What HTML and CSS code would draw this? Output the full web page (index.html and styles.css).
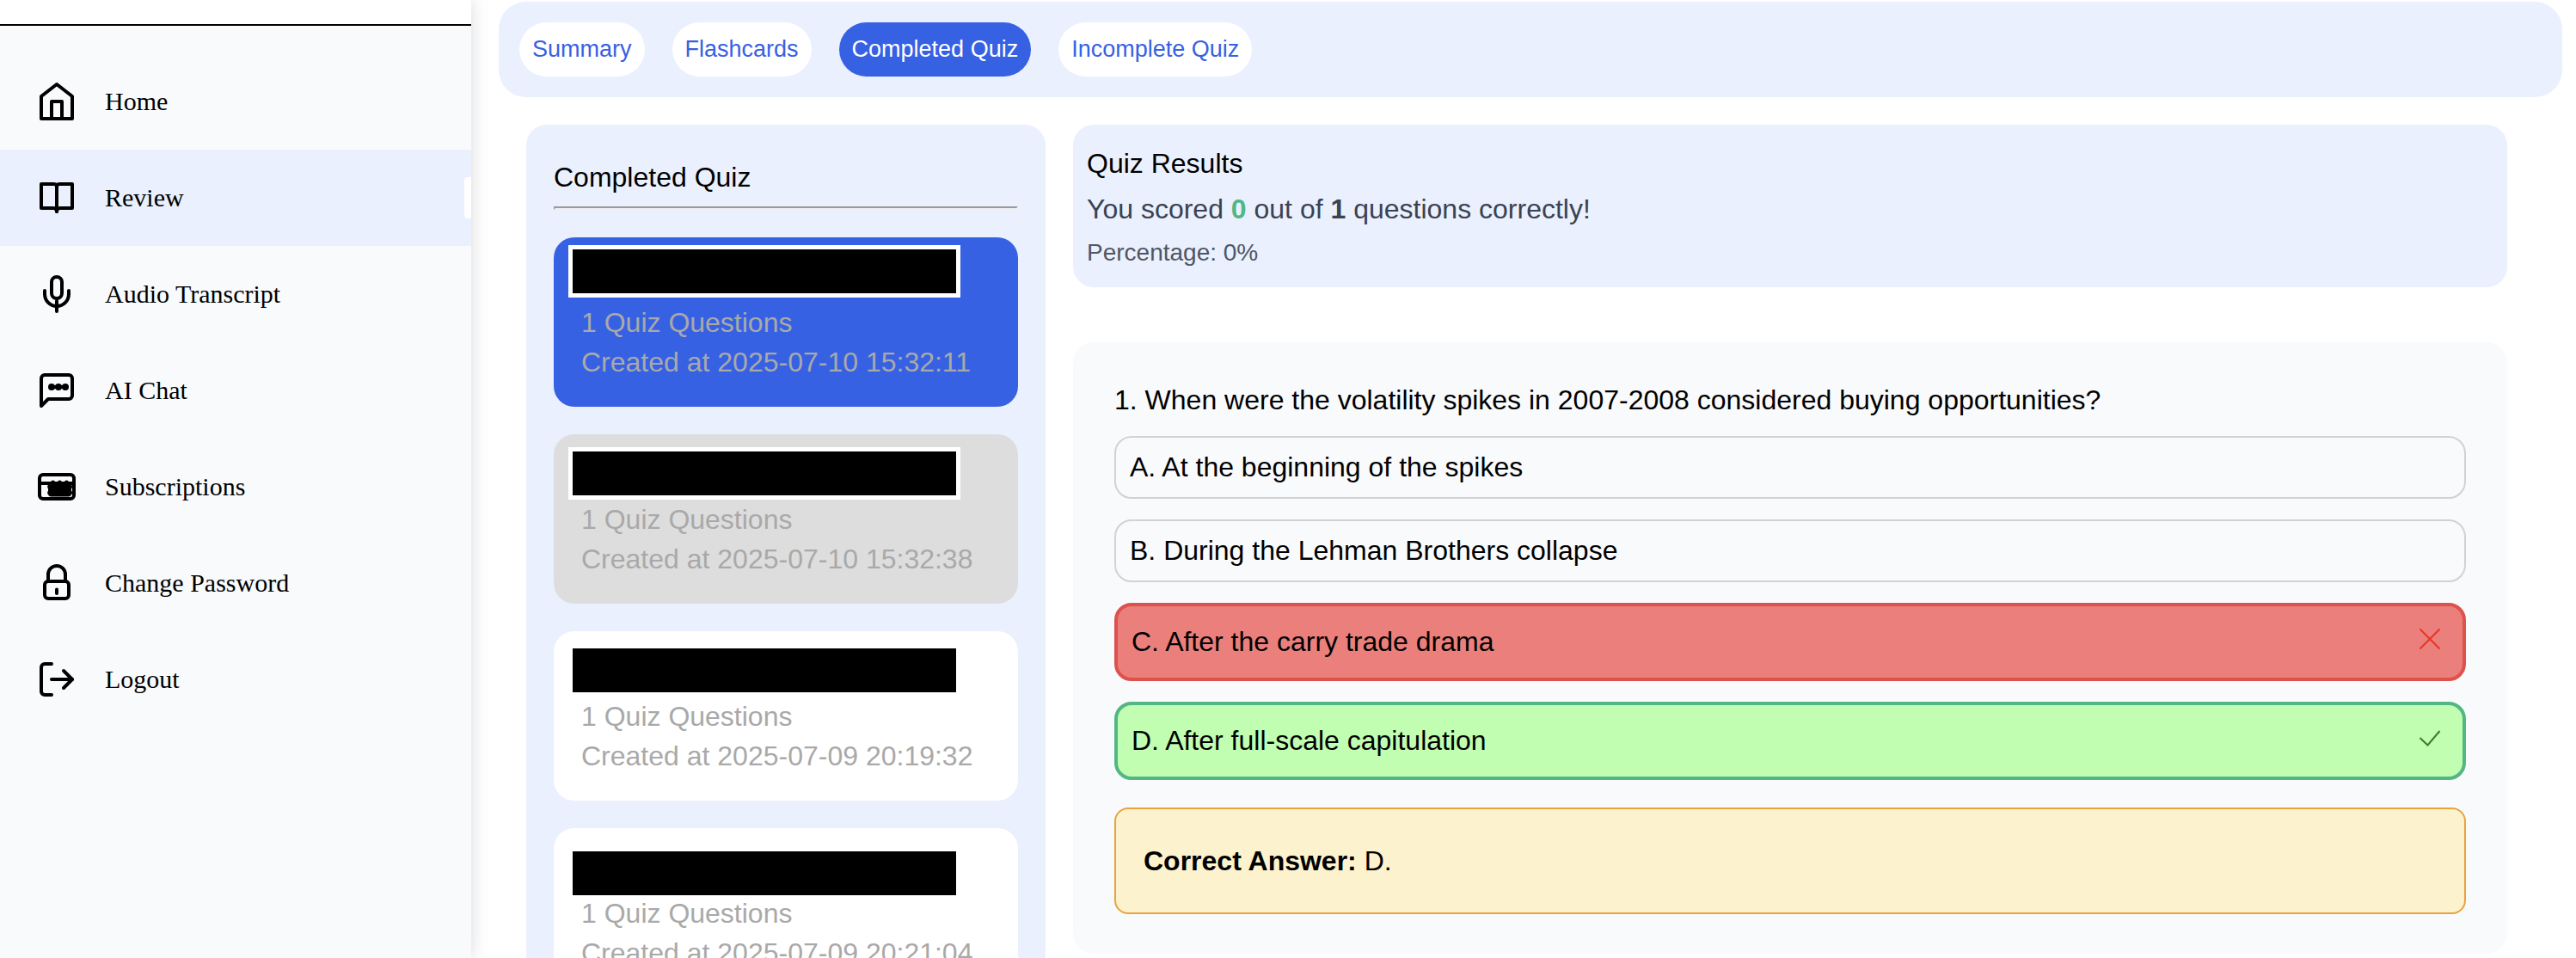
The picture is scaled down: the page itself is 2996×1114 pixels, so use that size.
FILE: index.html
```html
<!DOCTYPE html>
<html lang="en">
<head>
  <meta charset="utf-8">
  <title>Completed Quiz</title>
  <link rel="stylesheet" href="styles.css">
</head>
<body>
  <div class="app">
    <aside class="sidebar">
      <div class="sidebar-top"></div>
      <nav class="nav" aria-label="Main">
        <a class="nav-item" href="#home">
          <svg class="nav-icon" viewBox="0 0 24 24" aria-hidden="true"><path d="M3 9l9-7 9 7v13H3z"/><path d="M9 22V12h6v10"/></svg>
          Home
        </a>
        <a class="nav-item nav-item-active" href="#review" aria-current="page">
          <svg class="nav-icon" viewBox="0 0 24 24" aria-hidden="true"><path d="M12 20V5c-.3-.7-.9-1-1.800-1H3v14h7.200c1 0 1.800.6 1.800 2z"/><path d="M12 20V5c.3-.7.9-1 1.800-1H21v14h-7.200c-1 0-1.800.6-1.800 2z"/></svg>
          Review
        </a>
        <a class="nav-item" href="#audio">
          <svg class="nav-icon" viewBox="0 0 24 24" aria-hidden="true"><rect x="9" y="2" width="6" height="12.500" rx="3"/><path d="M5 10v2a7 7 0 0 0 14 0v-2"/><path d="M12 16v6"/></svg>
          Audio Transcript
        </a>
        <a class="nav-item" href="#chat">
          <svg class="nav-icon" viewBox="0 0 24 24" aria-hidden="true"><path d="M5 3h14a2 2 0 0 1 2 2v10a2 2 0 0 1-2 2H7l-4 4V5a2 2 0 0 1 2-2z"/><path d="M9 10h8"/><circle class="dot" cx="9" cy="10" r="2"/><circle class="dot" cx="13" cy="10" r="2"/><circle class="dot" cx="17" cy="10" r="2"/></svg>
          AI Chat
        </a>
        <a class="nav-item" href="#subscriptions">
          <svg class="nav-icon" viewBox="0 0 24 24" aria-hidden="true"><rect x="2" y="5" width="20" height="14" rx="2"/><path d="M2 10h20"/><rect class="dot" x="7" y="9.400" width="13.500" height="8.300" rx="1.800"/><circle class="dot" cx="9.800" cy="9.400" r="1.200"/><circle class="dot" cx="13.700" cy="9.400" r="1.200"/><circle class="dot" cx="17.700" cy="9.400" r="1.200"/><circle class="dot" cx="8" cy="12" r="1.400"/><circle class="dot" cx="8" cy="15.500" r="1.400"/><circle class="dot" cx="19.600" cy="12" r="1.400"/><circle class="dot" cx="19.600" cy="15.500" r="1.400"/></svg>
          Subscriptions
        </a>
        <a class="nav-item" href="#password">
          <svg class="nav-icon" viewBox="0 0 24 24" aria-hidden="true"><rect x="5" y="11" width="14" height="10" rx="2"/><path d="M7 11V7a5 5 0 0 1 10 0v4"/><path d="M12 15.700v2.300"/></svg>
          Change Password
        </a>
        <a class="nav-item" href="#logout">
          <svg class="nav-icon" viewBox="0 0 24 24" aria-hidden="true"><path d="M9 3H5a2 2 0 0 0-2 2v14a2 2 0 0 0 2 2h4"/><path d="M9 12h12"/><path d="M16 7l5 5-5 5"/></svg>
          Logout
        </a>
      </nav>
    </aside>

    <main class="main">
      <div class="tabs">
        <button class="tab" type="button">Summary</button>
        <button class="tab" type="button">Flashcards</button>
        <button class="tab tab-active" type="button">Completed Quiz</button>
        <button class="tab" type="button">Incomplete Quiz</button>
      </div>

      <div class="columns">
        <section class="quiz-list">
          <h2 class="quiz-list-title">Completed Quiz</h2>
          <hr class="divider">
          <div class="cards">
            <button class="card card-selected" type="button">
              <span class="card-title"></span>
              <span class="card-line">1 Quiz Questions</span>
              <span class="card-line">Created at 2025-07-10 15:32:11</span>
              <span class="cover cover-high"></span>
            </button>
            <button class="card card-hover" type="button">
              <span class="card-title"></span>
              <span class="card-line">1 Quiz Questions</span>
              <span class="card-line">Created at 2025-07-10 15:32:38</span>
              <span class="cover cover-mid"></span>
            </button>
            <button class="card" type="button">
              <span class="card-title"></span>
              <span class="card-line">1 Quiz Questions</span>
              <span class="card-line">Created at 2025-07-09 20:19:32</span>
              <span class="cover cover-mid"></span>
            </button>
            <button class="card" type="button">
              <span class="card-title"></span>
              <span class="card-line">1 Quiz Questions</span>
              <span class="card-line">Created at 2025-07-09 20:21:04</span>
              <span class="cover cover-low"></span>
            </button>
          </div>
        </section>

        <div class="detail">
          <section class="results">
            <h2 class="results-title">Quiz Results</h2>
            <p class="score">You scored <strong class="score-right">0</strong> out of <strong>1</strong> questions correctly!</p>
            <p class="percentage">Percentage: 0%</p>
          </section>

          <section class="question">
            <h3 class="question-title">1. When were the volatility spikes in 2007-2008 considered buying opportunities?</h3>
            <ul class="options">
              <li class="option">A. At the beginning of the spikes</li>
              <li class="option">B. During the Lehman Brothers collapse</li>
              <li class="option option-wrong">
                C. After the carry trade drama
                <svg class="mark" viewBox="0 0 44 44" role="img" aria-label="Wrong"><path d="M10.500 10.500l23 23M33.500 10.500l-23 23"/></svg>
              </li>
              <li class="option option-right">
                D. After full-scale capitulation
                <svg class="mark" viewBox="0 0 44 44" role="img" aria-label="Correct"><path d="M10.500 22l9 8.500 14-16.500"/></svg>
              </li>
            </ul>
            <p class="answer"><strong>Correct Answer:</strong> D.</p>
          </section>
        </div>
      </div>
    </main>
  </div>
</body>
</html>
```
FILE: styles.css
```css
* {
  box-sizing: border-box;
}

body,
h2,
h3,
p,
ul {
  margin: 0;
  padding: 0;
}

body {
  background: #fff;
  color: #000;
  font-family: "Liberation Sans", Arial, sans-serif;
  font-size: 32px;
  line-height: 46px;
}

button {
  border: 0;
  font-family: inherit;
  cursor: pointer;
}

.app {
  display: flex;
  height: 100vh;
  overflow: hidden;
}

/* Sidebar */

.sidebar {
  flex: 0 0 548px;
  background: #f9fafc;
  box-shadow: 0 0 20px rgba(0, 0, 0, 0.15);
}

.sidebar-top {
  height: 30px;
  background: #fff;
  border-bottom: 2px solid #000;
}

.nav {
  padding-top: 32px;
}

.nav-item {
  position: relative;
  display: flex;
  align-items: center;
  gap: 32px;
  height: 112px;
  padding-left: 42px;
  color: #000;
  font-family: "Liberation Serif", "Times New Roman", serif;
  font-size: 30px;
  text-decoration: none;
}

.nav-item-active {
  background: #eaf0fd;
}

.nav-item-active::after {
  content: "";
  position: absolute;
  top: 32px;
  right: 0;
  width: 8px;
  height: 48px;
  border-radius: 4px 0 0 4px;
  background: #fff;
}

.nav-icon {
  width: 48px;
  height: 48px;
  fill: none;
  stroke: #000;
  stroke-width: 2;
  stroke-linecap: round;
  stroke-linejoin: round;
}

.dot {
  fill: #000;
  stroke: none;
}

/* Tabs */

.main {
  flex: 1;
  min-width: 0;
  padding: 2px 16px 0 32px;
  overflow-y: auto;
  scrollbar-width: none;
}

.tabs {
  display: flex;
  gap: 32px;
  padding: 24px;
  border-radius: 32px;
  background: #eaf0fd;
}

.tab {
  height: 63px;
  padding: 0 15px;
  border-radius: 32px;
  background: #fff;
  color: #3761e3;
  font-size: 27px;
}

.tab-active {
  background: #3761e3;
  color: #fff;
}

/* Two columns */

.columns {
  display: grid;
  grid-template-columns: 151fr 417fr;
  align-items: start;
  gap: 32px;
  padding: 32px 64px 0 32px;
}

.quiz-list {
  padding: 38px 32px 32px;
  border-radius: 24px;
  background: #eaf0fd;
}

.quiz-list-title,
.results-title,
.question-title {
  font-size: 32px;
  font-weight: 400;
}

.divider {
  height: 4px;
  margin: 11px 0 32px;
  border: 2px solid;
  border-color: #9a9a9a #eee #eee #9a9a9a;
}

.cards {
  display: flex;
  flex-direction: column;
  gap: 32px;
}

.card {
  position: relative;
  display: flex;
  flex-direction: column;
  padding: 30px 32px 29px;
  border-radius: 24px;
  background: #fff;
  color: #a9a9a9;
  font-size: 32px;
  line-height: 46px;
  text-align: left;
}

.card-selected {
  background: #3761e3;
}

.card-hover {
  background: #ddd;
}

.card-title {
  height: 46px;
}

/* Block that hides the quiz title */
.cover {
  position: absolute;
  left: 17px;
  width: 456px;
  height: 61px;
  border: 5px solid #fff;
  background: #000;
}

.cover-high {
  top: 9px;
}

.cover-mid {
  top: 15px;
}

.cover-low {
  top: 22px;
}

/* Results */

.results {
  display: flex;
  flex-direction: column;
  gap: 7px;
  padding: 22px 16px 19px;
  border-radius: 24px;
  background: #eaf0fd;
}

.score {
  color: #3b4252;
}

.score-right {
  color: #52b687;
}

.percentage {
  color: #4f5664;
  font-size: 28px;
  line-height: 42px;
}

/* Question */

.question {
  margin-top: 64px;
  padding: 44px 48px 46px;
  border-radius: 24px;
  background: #f9fafc;
}

.options {
  display: flex;
  flex-direction: column;
  gap: 24px;
  margin-top: 19px;
  list-style: none;
}

.option {
  display: flex;
  align-items: center;
  justify-content: space-between;
  padding: 16px;
  border: 2px solid #d0d2d5;
  border-radius: 20px;
  line-height: 37px;
}

.option-wrong {
  border: 4px solid #dd524c;
  background: #eb7f7b;
}

.option-right {
  border: 4px solid #54b685;
  background: #c1feb1;
}

.mark {
  width: 44px;
  height: 44px;
  margin-bottom: 7px;
  fill: none;
  stroke: #ea3323;
  stroke-width: 2;
}

.option-right .mark {
  stroke: #377e22;
}

.answer {
  margin-top: 32px;
  padding: 37px 32px;
  border: 2px solid #e8a33d;
  border-radius: 16px;
  background: #fcf2cd;
}
```
